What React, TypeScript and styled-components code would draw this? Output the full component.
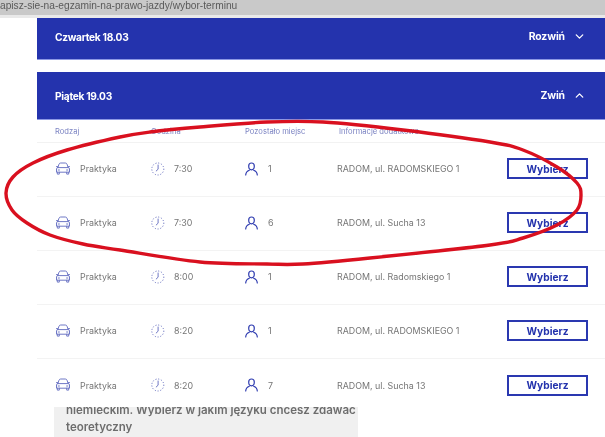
import React from "react";
import styled, { createGlobalStyle } from "styled-components";
import { ChevronDown, ChevronUp } from "lucide-react";

const Global = createGlobalStyle`
  html, body { margin: 0; padding: 0; background: #fff; overflow: hidden; }
  body { width: 605px; height: 437px; font-family: "Inter", "Liberation Sans", sans-serif; }
`;

const Page = styled.div`
  position: relative;
  width: 605px;
  height: 437px;
  overflow: hidden;
  background: #fff;
  filter: blur(0.4px);
`;

const AddressBar = styled.div`
  height: 15px;
  background: #c9c9c9;
  border-bottom: 3px solid #e9e9e9;
  font-family: "Liberation Sans", sans-serif;
  font-size: 10.2px;
  line-height: 11px;
  color: #5a5a5a;
  white-space: nowrap;
  overflow: hidden;
`;

const Content = styled.main`
  padding-left: 37px;
  display: flex;
  flex-direction: column;
`;

const DayBar = styled.div<{ $height: number; $lift: number; $gap: number }>`
  box-sizing: border-box;
  height: ${(p) => p.$height}px;
  margin-top: ${(p) => p.$gap}px;
  padding: 0 19px ${(p) => p.$lift}px 18px;
  background: #2433ad;
  border-bottom: 1px solid #8d98e4;
  color: #fff;
  display: flex;
  align-items: center;
  justify-content: space-between;
  font-size: 10.2px;
  font-weight: 700;
  letter-spacing: -0.3px;
`;

const Toggle = styled.span`
  display: flex;
  align-items: center;
  gap: 8px;
  font-size: 10.4px;
  letter-spacing: -0.1px;
`;

const TableHead = styled.div`
  box-sizing: border-box;
  height: 23px;
  display: grid;
  grid-template-columns: 96px 94px 94px 168px 81px;
  align-items: center;
  padding-left: 18px;
  border-bottom: 1px solid #f2f2f2;
  color: #7a82c2;
  font-size: 7.6px;
  white-space: nowrap;
`;

const Row = styled.div`
  box-sizing: border-box;
  height: 54px;
  display: grid;
  grid-template-columns: 96px 94px 92px 170px 81px;
  align-items: center;
  padding: 0 0 2px 18px;
  border-bottom: 1px solid #f3f3f3;
  color: #757575;
  font-size: 8.9px;
  white-space: nowrap;

  &:last-child {
    border-bottom: none;
  }
`;

const IconCell = styled.div`
  display: flex;
  align-items: center;
`;

const IconBox = styled.span<{ $width: number }>`
  flex: none;
  width: ${(p) => p.$width}px;
  display: flex;
  align-items: center;
`;

const PickButton = styled.button`
  box-sizing: border-box;
  width: 81px;
  height: 21px;
  padding: 0;
  background: #fff;
  border: 2px solid #2a38b0;
  border-radius: 0;
  color: #2433ad;
  font-family: inherit;
  font-size: 10.2px;
  font-weight: 700;
`;

const Notice = styled.div`
  position: absolute;
  left: 54px;
  top: 407px;
  box-sizing: border-box;
  width: 304px;
  height: 30px;
  padding-left: 12px;
  overflow: hidden;
  background: #f0f0f0;
  color: #6d6d6d;
  font-size: 11.5px;
  font-weight: 600;
  line-height: 17px;
  white-space: nowrap;
`;

const NoticeText = styled.div`
  margin-top: -5px;
`;

const Scribble = styled.svg`
  position: absolute;
  left: 0;
  top: 0;
  pointer-events: none;
`;

const CarIcon = () => (
  <svg width="16" height="14" viewBox="0 0 16 14" fill="none" stroke="#6f78c6" strokeWidth="1" strokeLinecap="round" strokeLinejoin="round">
    <path d="M2.800 5.600 4 2.200C4.300 1.400 4.900 1 5.700 1h4.600c.8 0 1.400.4 1.700 1.200l1.200 3.400" />
    <path d="M2.800 5.600h10.400c.8 0 1.300.6 1.300 1.300v3.300H1.500V6.900c0-.7.5-1.300 1.300-1.300Z" />
    <path d="M2.300 10.200v1.900h2v-1.900M11.700 10.200v1.900h2v-1.900" />
    <path d="M1.500 4.600h1.300M13.200 4.600h1.300M3.200 8h1.200M11.600 8h1.200" />
  </svg>
);

const ClockIcon = () => (
  <svg width="14" height="14" viewBox="0 0 14 14" fill="none" stroke="#5f68bd">
    <circle cx="6.800" cy="7" r="6" strokeWidth="1" strokeDasharray="1 1.800" />
    <path d="M7.100 3v4.200L5.200 9" strokeWidth="0.9" strokeLinecap="round" strokeLinejoin="round" />
  </svg>
);

const PersonIcon = () => (
  <svg width="13" height="14" viewBox="0 0 13 14" fill="none" stroke="#2f3cb0" strokeWidth="1.200" strokeLinecap="round">
    <path d="M6.500 1c1.700 0 2.800 1.300 2.800 3 0 1.900-1.100 3.800-2.800 3.800S3.700 5.900 3.700 4C3.700 2.300 4.800 1 6.500 1Z" />
    <path d="M.7 13c.2-2.800 1.400-4 3.600-4.800M12.300 13c-.2-2.800-1.400-4-3.600-4.800" />
  </svg>
);

type Slot = { time: string; left: string; place: string };

const slots: Slot[] = [
  { time: "7:30", left: "1", place: "RADOM, ul. RADOMSKIEGO 1" },
  { time: "7:30", left: "6", place: "RADOM, ul. Sucha 13" },
  { time: "8:00", left: "1", place: "RADOM, ul. Radomskiego 1" },
  { time: "8:20", left: "1", place: "RADOM, ul. RADOMSKIEGO 1" },
  { time: "8:20", left: "7", place: "RADOM, ul. Sucha 13" },
];

const loop: [number, number][] = [
  [6, 193], [13, 177], [33, 163], [67, 150], [120, 137], [150, 132], [200, 127], [267, 122],
  [323, 122], [403, 130], [490, 142], [523, 150], [557, 167], [577, 183], [581, 195], [577, 210],
  [557, 225], [523, 238], [490, 245], [370, 258], [303, 264], [267, 264], [200, 262], [120, 250],
  [83, 244], [50, 235], [27, 223], [12, 210],
];

function smoothLoop(pts: [number, number][]) {
  const n = pts.length;
  let d = `M${pts[0][0]} ${pts[0][1]}`;
  for (let i = 0; i < n; i++) {
    const p0 = pts[(i - 1 + n) % n];
    const p1 = pts[i];
    const p2 = pts[(i + 1) % n];
    const p3 = pts[(i + 2) % n];
    const c1x = p1[0] + (p2[0] - p0[0]) / 6;
    const c1y = p1[1] + (p2[1] - p0[1]) / 6;
    const c2x = p2[0] - (p3[0] - p1[0]) / 6;
    const c2y = p2[1] - (p3[1] - p1[1]) / 6;
    d += ` C${c1x} ${c1y} ${c2x} ${c2y} ${p2[0]} ${p2[1]}`;
  }
  return d + "Z";
}

export default function App() {
  return (
    <Page>
      <Global />
      <AddressBar>apisz-sie-na-egzamin-na-prawo-jazdy/wybor-terminu</AddressBar>
      <Content>
        <DayBar $height={42} $lift={4} $gap={0}>
          <span>Czwartek 18.03</span>
          <Toggle>
            Rozwiń <ChevronDown size={13} strokeWidth={2.4} />
          </Toggle>
        </DayBar>
        <DayBar $height={48} $lift={0} $gap={12}>
          <span>Piątek 19.03</span>
          <Toggle>
            Zwiń <ChevronUp size={13} strokeWidth={2.4} />
          </Toggle>
        </DayBar>
        <TableHead>
          <span>Rodzaj</span>
          <span>Godzina</span>
          <span>Pozostało miejsc</span>
          <span>Informacje dodatkowe</span>
        </TableHead>
        {slots.map((s, i) => (
          <Row key={i}>
            <IconCell>
              <IconBox $width={25}><CarIcon /></IconBox>
              Praktyka
            </IconCell>
            <IconCell>
              <IconBox $width={23}><ClockIcon /></IconBox>
              {s.time}
            </IconCell>
            <IconCell>
              <IconBox $width={23}><PersonIcon /></IconBox>
              {s.left}
            </IconCell>
            <span>{s.place}</span>
            <PickButton>Wybierz</PickButton>
          </Row>
        ))}
      </Content>
      <Notice>
        <NoticeText>
          niemieckim. Wybierz w jakim języku chcesz zdawać egzamin
          <br />
          teoretyczny
        </NoticeText>
      </Notice>
      <Scribble width="605" height="437" viewBox="0 0 605 437" fill="none">
        <path d={smoothLoop(loop)} stroke="#d9101f" strokeWidth="3.400" strokeLinejoin="round" />
      </Scribble>
    </Page>
  );
}
